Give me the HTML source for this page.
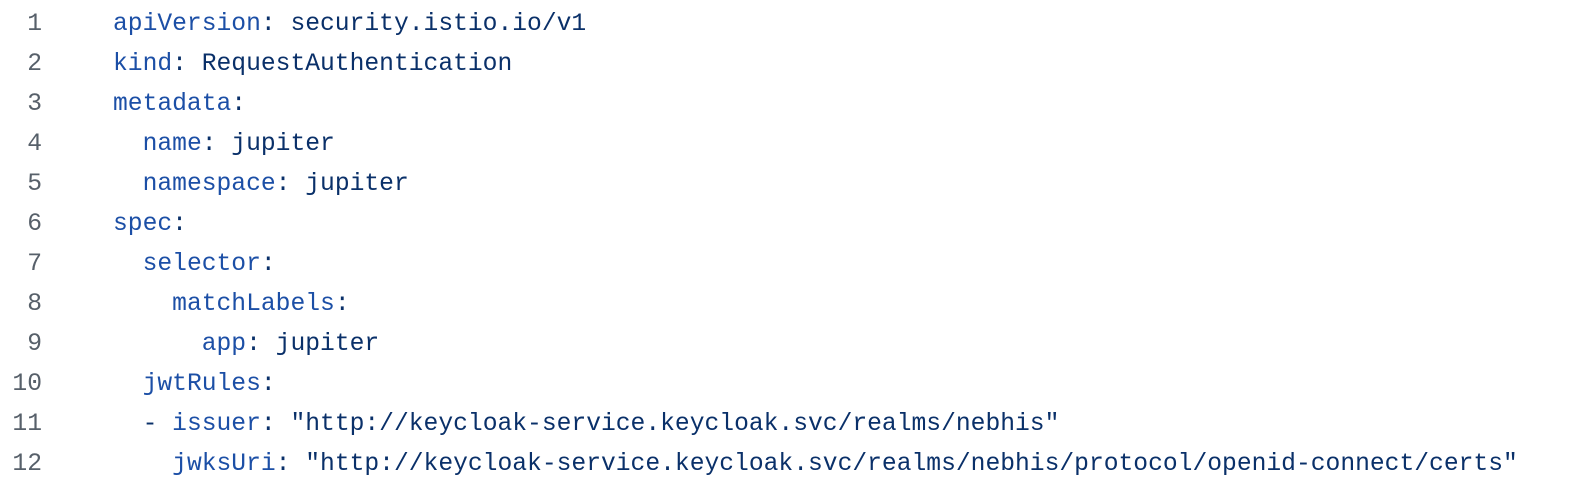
<!DOCTYPE html>
<html><head><style>
html,body{margin:0;padding:0;background:#fff;width:1580px;height:494px;overflow:hidden}
.c{position:absolute;top:4px;left:0;font-family:"Liberation Mono",monospace;font-size:24.65px;line-height:40px}
.r{position:relative;height:40px}
.n{position:absolute;left:0;width:42px;text-align:right;color:#57606a}
.t{position:absolute;left:113px;color:#0a3069;white-space:pre}
.k{color:#1c4fa6}
</style></head><body><div class="c"><div class="r"><span class="n">1</span><span class="t"><span class="k">apiVersion</span>: security.istio.io/v1</span></div><div class="r"><span class="n">2</span><span class="t"><span class="k">kind</span>: RequestAuthentication</span></div><div class="r"><span class="n">3</span><span class="t"><span class="k">metadata</span>:</span></div><div class="r"><span class="n">4</span><span class="t">  <span class="k">name</span>: jupiter</span></div><div class="r"><span class="n">5</span><span class="t">  <span class="k">namespace</span>: jupiter</span></div><div class="r"><span class="n">6</span><span class="t"><span class="k">spec</span>:</span></div><div class="r"><span class="n">7</span><span class="t">  <span class="k">selector</span>:</span></div><div class="r"><span class="n">8</span><span class="t">    <span class="k">matchLabels</span>:</span></div><div class="r"><span class="n">9</span><span class="t">      <span class="k">app</span>: jupiter</span></div><div class="r"><span class="n">10</span><span class="t">  <span class="k">jwtRules</span>:</span></div><div class="r"><span class="n">11</span><span class="t">  - <span class="k">issuer</span>: "http://keycloak-service.keycloak.svc/realms/nebhis"</span></div><div class="r"><span class="n">12</span><span class="t">    <span class="k">jwksUri</span>: "http://keycloak-service.keycloak.svc/realms/nebhis/protocol/openid-connect/certs"</span></div></div></body></html>
